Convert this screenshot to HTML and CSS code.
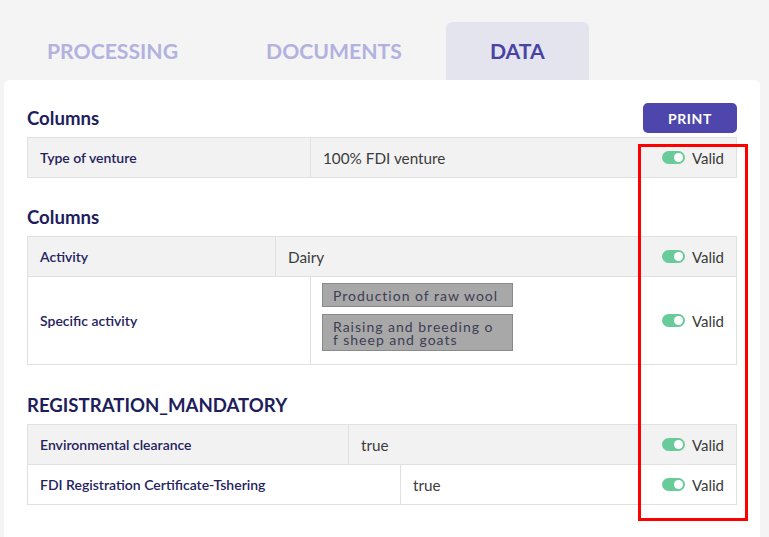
FILE: index.html
```html
<!DOCTYPE html>
<html lang="en">
<head>
  <meta charset="UTF-8">
  <title>Application Data</title>
  <link rel="stylesheet" href="styles.css">
</head>
<body>

<div class="tabs">
  <div class="tab">PROCESSING</div>
  <div class="tab">DOCUMENTS</div>
  <div class="tab active">DATA</div>
</div>

<div class="card">
  <div class="section first">
    <div class="section-head">
      <h2>Columns</h2>
      <button class="print-btn">PRINT</button>
    </div>
    <div class="data-table">
      <div class="row shaded">
        <div class="cell label w-284">Type of venture</div>
        <div class="cell value">100% FDI venture</div>
        <div class="cell status"><span class="toggle"></span>Valid</div>
      </div>
    </div>
  </div>

  <div class="section">
    <h2>Columns</h2>
    <div class="data-table">
      <div class="row shaded">
        <div class="cell label w-249">Activity</div>
        <div class="cell value">Dairy</div>
        <div class="cell status"><span class="toggle"></span>Valid</div>
      </div>
      <div class="row">
        <div class="cell label w-284">Specific activity</div>
        <div class="cell value tags">
          <div class="tag">Production of raw wool</div>
          <div class="tag tag-long">Raising and breeding of sheep and goats</div>
        </div>
        <div class="cell status"><span class="toggle"></span>Valid</div>
      </div>
    </div>
  </div>

  <div class="section">
    <h2>REGISTRATION_MANDATORY</h2>
    <div class="data-table">
      <div class="row shaded">
        <div class="cell label w-322">Environmental clearance</div>
        <div class="cell value">true</div>
        <div class="cell status"><span class="toggle"></span>Valid</div>
      </div>
      <div class="row">
        <div class="cell label w-374">FDI Registration Certificate-Tshering</div>
        <div class="cell value">true</div>
        <div class="cell status"><span class="toggle"></span>Valid</div>
      </div>
    </div>
  </div>
</div>

<div class="highlight"></div>

</body>
</html>
```

FILE: styles.css
```css
* {
  margin: 0;
  padding: 0;
  box-sizing: border-box;
}

body {
  font-family: 'Lato', 'Noto Sans', sans-serif;
  background-color: #f4f4f4;
  color: #333;
  position: relative;
  height: 537px;
  overflow: hidden;
}

.tabs {
  display: flex;
  padding: 22px 0 0 3px;
}

.tab {
  padding: 0 44px;
  height: 58px;
  line-height: 58px;
  font-size: 21.2px;
  font-weight: 700;
  color: #b3b1df;
  border-radius: 6px 6px 0 0;
}

.tab.active {
  background-color: #e4e4ee;
  color: #4a43a6;
}

.card {
  background-color: #fff;
  border-radius: 6px;
  margin: 0 9px 0 4px;
  padding: 23px 23px 40px;
}

.section {
  margin-top: 29px;
}

.section.first {
  margin-top: 0;
}

.section:last-child {
  margin-top: 30px;
}

h2 {
  font-size: 18.6px;
  font-weight: 700;
  line-height: 20px;
  color: #201d5c;
  margin-bottom: 9px;
}

.section-head {
  display: flex;
  justify-content: space-between;
  align-items: center;
  height: 30px;
  margin-bottom: 4px;
}

.section-head h2 {
  margin-bottom: 0;
}

.print-btn {
  width: 94px;
  height: 30px;
  border: none;
  border-radius: 5px;
  background-color: #4e46ad;
  color: #fff;
  font-family: inherit;
  font-size: 14px;
  font-weight: 700;
  letter-spacing: 0.6px;
}

.data-table {
  border-top: 1px solid #e0e0e0;
}

.row {
  display: flex;
  min-height: 40px;
  border: 1px solid #e0e0e0;
  border-top: none;
}

.row.shaded {
  background-color: #f2f2f2;
}

.cell {
  display: flex;
  align-items: center;
}

.label {
  flex: none;
  padding: 0 12px;
  border-right: 1px solid #e0e0e0;
  font-size: 14px;
  font-weight: 600;
  color: #24225e;
}

.w-249 { width: 248px; }
.w-284 { width: 283px; }
.w-322 { width: 321px; }
.w-374 { width: 373px; }

.value {
  flex: 1;
  padding: 0 12px;
  font-size: 15.3px;
  color: #3c3c3c;
}

.value.tags {
  flex-direction: column;
  align-items: flex-start;
  padding: 6px 11px;
}

.tag {
  width: 191px;
  padding: 5px 6px 4px 10px;
  margin-bottom: 7px;
  border: 1px solid #8a8a8a;
  background-color: #a8a8a8;
  color: #3e3e55;
  font-size: 14px;
  line-height: 13px;
  letter-spacing: 1px;
  word-break: break-all;
}

.tag-long {
  padding-right: 18px;
}

.status {
  flex: none;
  padding: 0 12px 0 0;
  font-size: 15px;
  color: #3a3a3a;
}

.toggle {
  position: relative;
  width: 23px;
  height: 13px;
  margin-right: 7px;
  border-radius: 7px;
  background-color: #6acb9a;
}

.toggle::after {
  content: '';
  position: absolute;
  top: 2px;
  right: 2px;
  width: 9px;
  height: 9px;
  border-radius: 50%;
  background-color: #fff;
}

.highlight {
  position: absolute;
  left: 638px;
  top: 144px;
  width: 110px;
  height: 377px;
  border: 3px solid #ff0000;
}
```
